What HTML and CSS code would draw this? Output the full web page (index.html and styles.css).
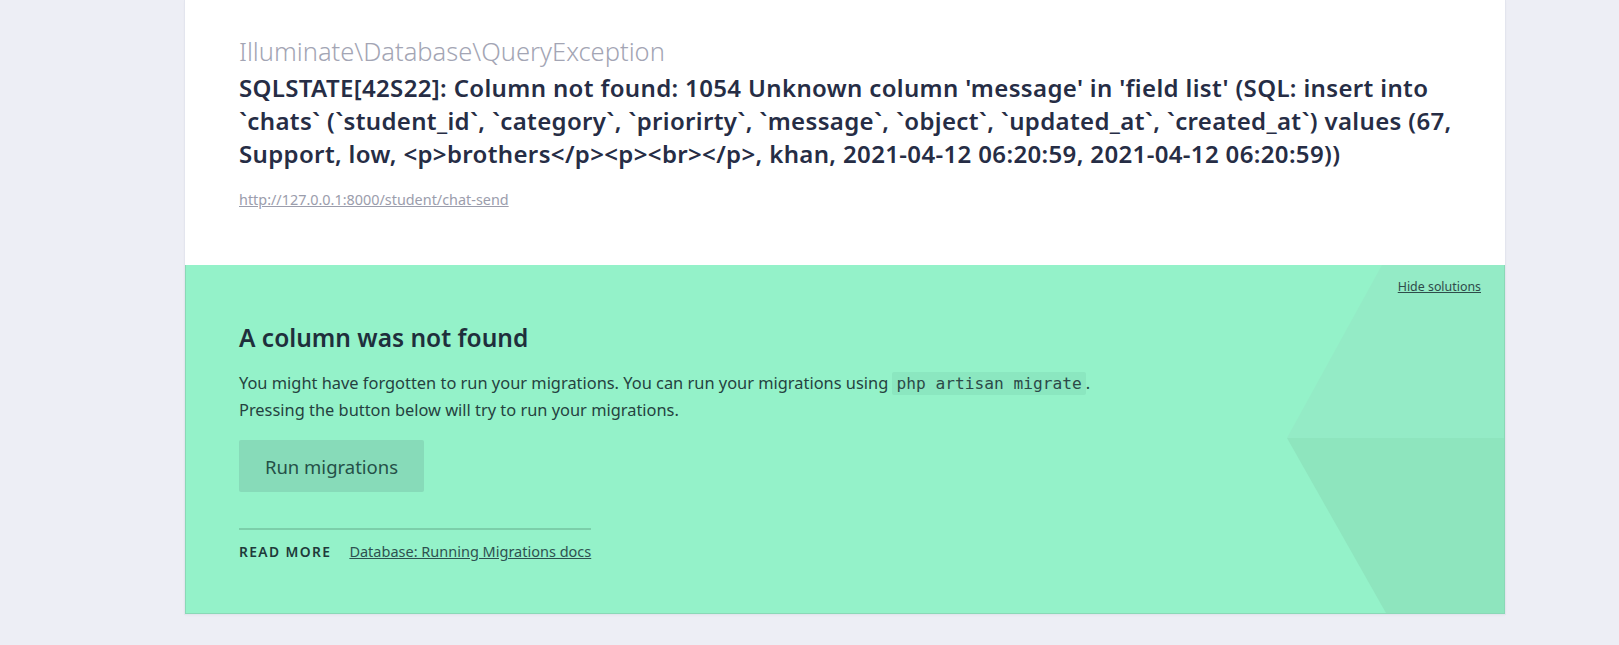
FILE: index.html
```html
<!DOCTYPE html>
<html lang="en">
<head>
<meta charset="utf-8">
<title>QueryException</title>
<link rel="stylesheet" href="styles.css">
</head>
<body>
<div class="page">
  <div class="card">
    <header class="header">
      <div class="exc-class">Illuminate\Database\QueryException</div>
      <div class="exc-msg">SQLSTATE[42S22]: Column not found: 1054 Unknown column 'message' in 'field list' (SQL: insert into `chats` (`student_id`, `category`, `priorirty`, `message`, `object`, `updated_at`, `created_at`) values (67, Support, low, &lt;p&gt;brothers&lt;/p&gt;&lt;p&gt;&lt;br&gt;&lt;/p&gt;, khan, 2021-04-12 06:20:59, 2021-04-12 06:20:59))</div>
      <a class="url" href="#">http://127.0.0.1:8000/student/chat-send</a>
    </header>
    <section class="solution">
      <svg class="bg-shape" viewBox="0 0 217 348" preserveAspectRatio="none" aria-hidden="true">
        <polygon points="95,0 217,0 217,173 0,173" fill="#94ebc6"/>
        <polygon points="0,173 217,173 217,348 99,348" fill="#8ee5be"/>
      </svg>
      <a class="hide" href="#">Hide solutions</a>
      <div class="sol-content">
        <h2 class="sol-title">A column was not found</h2>
        <p class="sol-text">You might have forgotten to run your migrations. You can run your migrations using <code class="code">php artisan migrate</code>.<br>Pressing the button below will try to run your migrations.</p>
        <button class="btn" type="button">Run migrations</button>
        <div class="readmore">
          <span class="rm-label">READ MORE</span>
          <a class="rm-link" href="#">Database: Running Migrations docs</a>
        </div>
      </div>
    </section>
  </div>
</div>
</body>
</html>
```
FILE: styles.css
```css
html, body {
  margin: 0;
  padding: 0;
}
body {
  background: #edeef5;
  font-family: "Noto Sans", "Open Sans", sans-serif;
  color: #252c42;
  height: 645px;
  overflow: hidden;
}
.page {
  padding-left: 185px;
}
.card {
  width: 1320px;
  background: #fff;
  box-shadow: 0 0 0 1px #e3e5ee, 0 1px 3px rgba(0, 0, 0, 0.05);
}
.header {
  height: 265px;
  box-sizing: border-box;
  padding: 34px 38px 0 54px;
}
.exc-class {
  font-size: 25.5px;
  font-weight: 300;
  line-height: 34px;
  color: #a3a5b4;
}
.exc-msg {
  margin-top: 3px;
  font-size: 24px;
  font-weight: 600;
  line-height: 33px;
  color: #262d45;
  letter-spacing: 0.35px;
}
.url {
  display: inline-block;
  margin-top: 20px;
  font-size: 14.4px;
  color: #9b9dac;
  text-decoration: underline;
}
.solution {
  position: relative;
  height: 349px;
  box-sizing: border-box;
  background: #94f2c9;
  border: 1px solid #8ad9b6;
  border-top: none;
  overflow: hidden;
}
.bg-shape {
  position: absolute;
  right: 0;
  top: 0;
  width: 217px;
  height: 348px;
}
.hide {
  position: absolute;
  top: 13px;
  right: 23px;
  font-size: 12.4px;
  color: #2f4c4a;
  text-decoration: underline;
}
.sol-content {
  position: relative;
  padding: 56px 53px 0;
}
.sol-title {
  margin: 0;
  font-size: 24.5px;
  font-weight: 600;
  line-height: 34px;
  color: #1f2f3c;
}
.sol-text {
  margin: 15px 0 0;
  font-size: 16.4px;
  line-height: 26px;
  color: #254240;
}
.code {
  font-family: "DejaVu Sans Mono", "Liberation Mono", monospace;
  font-size: 16.2px;
  background: #8be7c0;
  padding: 2px 4px;
  border-radius: 2px;
  color: #2c4a48;
}
.btn {
  display: block;
  margin-top: 17px;
  width: 185px;
  height: 52px;
  border: none;
  border-radius: 2px;
  background: #87dbb9;
  color: #245048;
  font-family: inherit;
  font-size: 18.5px;
}
.readmore {
  display: inline-flex;
  gap: 18px;
  align-items: center;
  margin-top: 36px;
  padding-top: 11px;
  border-top: 2px solid #7ccfaa;
  white-space: nowrap;
}
.rm-label {
  font-size: 13.8px;
  font-weight: 600;
  letter-spacing: 1.4px;
  color: #203a3a;
}
.rm-link {
  font-size: 14.5px;
  color: #2e5150;
  text-decoration: underline;
}
```
